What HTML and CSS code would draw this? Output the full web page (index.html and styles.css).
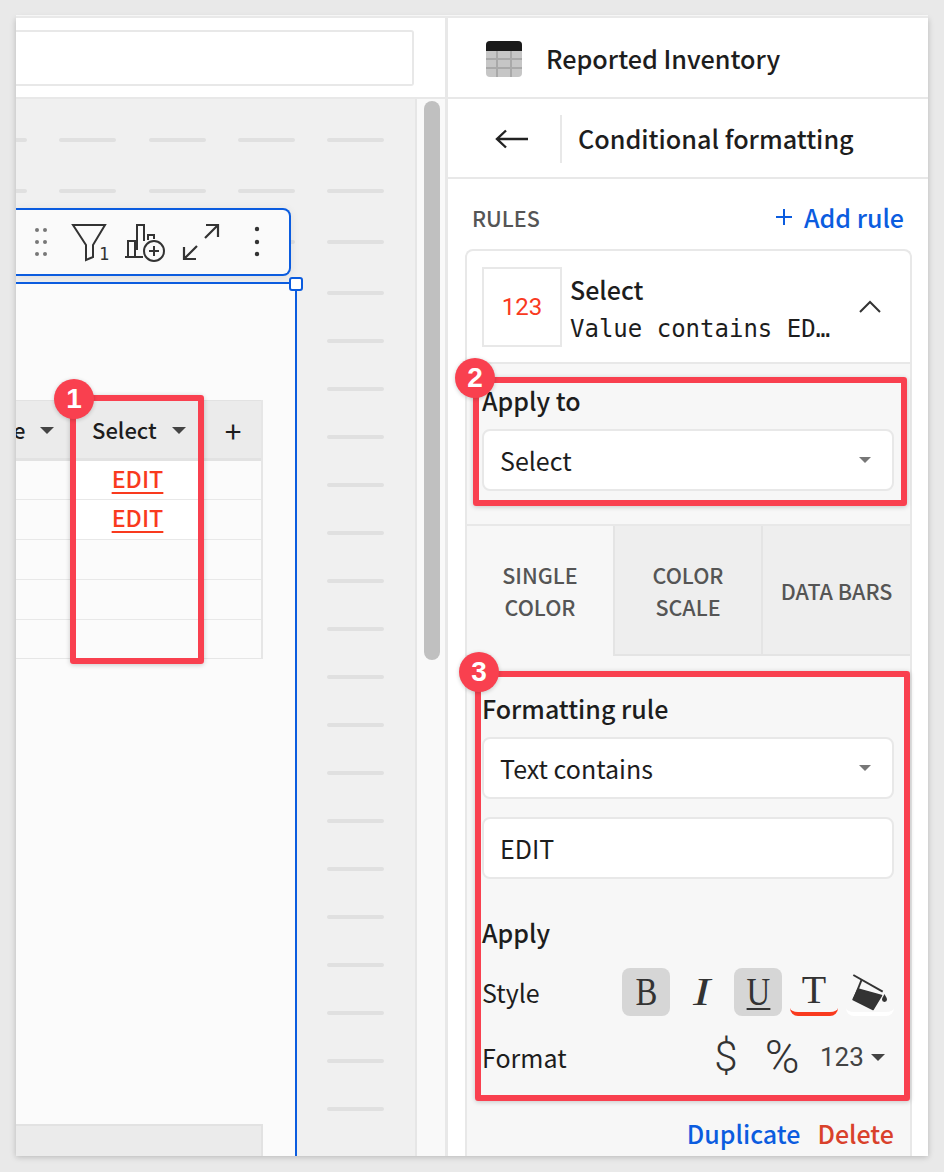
FILE: index.html
```html
<!DOCTYPE html>
<html>

<head>
<title>Conditional formatting</title>
<link rel="stylesheet" href="styles.css">
</head>

<body>
<div class="window">
	<div class="main">
		<div class="topbar"><div class="searchbox"></div></div>
		<div class="canvas">
			<div class="guides">
				<div class="guide-group guide-group-top">
					<div class="guide-row"><i></i><i></i><i></i><i></i><i></i></div>
					<div class="guide-row"><i></i><i></i><i></i><i></i><i></i></div>
					<div class="guide-row"><i></i><i></i><i></i><i></i><i></i></div>
				</div>
				<div class="guide-group">
					<div class="guide-row"><i></i><i></i><i></i><i></i><i></i></div>
					<div class="guide-row"><i></i><i></i><i></i><i></i><i></i></div>
					<div class="guide-row"><i></i><i></i><i></i><i></i><i></i></div>
					<div class="guide-row"><i></i><i></i><i></i><i></i><i></i></div>
					<div class="guide-row"><i></i><i></i><i></i><i></i><i></i></div>
					<div class="guide-row"><i></i><i></i><i></i><i></i><i></i></div>
					<div class="guide-row"><i></i><i></i><i></i><i></i><i></i></div>
					<div class="guide-row"><i></i><i></i><i></i><i></i><i></i></div>
					<div class="guide-row"><i></i><i></i><i></i><i></i><i></i></div>
					<div class="guide-row"><i></i><i></i><i></i><i></i><i></i></div>
					<div class="guide-row"><i></i><i></i><i></i><i></i><i></i></div>
					<div class="guide-row"><i></i><i></i><i></i><i></i><i></i></div>
					<div class="guide-row"><i></i><i></i><i></i><i></i><i></i></div>
					<div class="guide-row"><i></i><i></i><i></i><i></i><i></i></div>
					<div class="guide-row"><i></i><i></i><i></i><i></i><i></i></div>
					<div class="guide-row"><i></i><i></i><i></i><i></i><i></i></div>
					<div class="guide-row"><i></i><i></i><i></i><i></i><i></i></div>
					<div class="guide-row"><i></i><i></i><i></i><i></i><i></i></div>
				</div>
			</div>

			<div class="toolbar">
				<svg width="274" height="64" viewBox="18 210 274 64" fill="none" stroke="#333" stroke-width="2">
					<g fill="#777" stroke="none">
						<circle cx="37" cy="230" r="2"/><circle cx="45" cy="230" r="2"/>
						<circle cx="37" cy="242" r="2"/><circle cx="45" cy="242" r="2"/>
						<circle cx="37" cy="254" r="2"/><circle cx="45" cy="254" r="2"/>
					</g>
					<path d="M73 225H105L93 245V257L86 260V245Z"/>
					<text x="99" y="260" class="filter-count">1</text>
					<path d="M125 257H143M128 257V241H135V257M137 250V225H144V241M148 240V235H154V239"/>
					<circle cx="154" cy="251" r="10"/>
					<path d="M149 251H159M154 246V256"/>
					<path d="M206 225H218V237M218 225L205 238M184 247V259H196M184 259L197 246" stroke-width="2.2"/>
					<g fill="#333" stroke="none">
						<circle cx="257" cy="229" r="2.2"/><circle cx="257" cy="242" r="2.2"/><circle cx="257" cy="254" r="2.2"/>
					</g>
				</svg>
			</div>

			<div class="widget">
				<span class="handle"></span>
				<div class="table">
					<div class="th th-clip"><span class="th-text th-e">e</span><span class="caret caret-dark"></span></div>
					<div class="th th-select"><span class="th-text">Select</span><span class="caret caret-dark"></span></div>
					<div class="th th-add">+</div>
					<div class="td"></div><div class="td td-white"><span class="edit">EDIT</span></div><div class="td"></div>
					<div class="td"></div><div class="td td-white"><span class="edit">EDIT</span></div><div class="td"></div>
					<div class="td"></div><div class="td"></div><div class="td"></div>
					<div class="td"></div><div class="td"></div><div class="td"></div>
					<div class="td"></div><div class="td"></div><div class="td"></div>
				</div>
				<div class="table-foot"></div>
			</div>
		</div>
		<div class="scroll-gutter"><div class="scroll-thumb"></div></div>
	</div>

	<div class="side">
		<div class="side-head">
			<svg class="table-icon" width="36" height="36" viewBox="0 0 36 36">
				<rect width="36" height="36" rx="4" fill="#c6c6c6"/>
				<path d="M0 10V4a4 4 0 0 1 4-4h28a4 4 0 0 1 4 4v6z" fill="#1a1a1a"/>
				<path d="M11 10V36M25 10V36M0 18H36M0 27H36" stroke="#a9a9a9" stroke-width="2"/>
			</svg>
			<span class="side-title">Reported Inventory</span>
		</div>
		<div class="side-sub">
			<div class="back">
				<svg width="34" height="20" viewBox="0 0 34 20" fill="none" stroke="#222" stroke-width="2.4"><path d="M33 10H2M11 1.500L2 10L11 18.500"/></svg>
			</div>
			<span class="side-title">Conditional formatting</span>
		</div>
		<div class="rules-head">
			<span class="rules-label">RULES</span>
			<span class="add-rule">
				<svg width="16" height="16" viewBox="0 0 16 16" stroke="#0b5cdf" stroke-width="2"><path d="M8 0V16M0 8H16"/></svg>
				Add rule
			</span>
		</div>
		<div class="rule-card">
			<div class="rule-head">
				<div class="rule-preview">123</div>
				<div class="rule-text">
					<div class="rule-name">Select</div>
					<div class="rule-desc">Value contains EDIT</div>
				</div>
				<svg class="chevron" width="24" height="14" viewBox="0 0 24 14" fill="none" stroke="#333" stroke-width="2"><path d="M2 12L12 2L22 12"/></svg>
			</div>
			<div class="rule-body">
				<div class="apply-to">
					<div class="label">Apply to</div>
					<div class="field"><span>Select</span><span class="caret"></span></div>
				</div>
				<div class="tabs">
					<div class="tab tab-active">SINGLE<br>COLOR</div>
					<div class="tab">COLOR<br>SCALE</div>
					<div class="tab">DATA BARS</div>
				</div>
				<div class="format-rule">
					<div class="label">Formatting rule</div>
					<div class="field"><span>Text contains</span><span class="caret"></span></div>
					<div class="field field-gap"><span>EDIT</span></div>
					<div class="label label-apply">Apply</div>
					<div class="opt-row opt-style">
						<span class="opt-name">Style</span>
						<div class="opt-btns">
							<span class="btn btn-on"><span class="glyph">B</span></span>
							<span class="btn btn-italic"><span class="glyph">I</span></span>
							<span class="btn btn-on btn-under"><span class="glyph">U</span></span>
							<span class="btn btn-red"><span class="glyph">T</span></span>
							<span class="btn btn-fill">
								<svg width="48" height="44" viewBox="0 0 48 44">
									<path d="M7.300 7L36.700 23.700" stroke="#333" stroke-width="2" fill="none"/>
									<path d="M15.700 11.500L8 31" stroke="#333" stroke-width="2" fill="none"/>
									<path d="M12 21L35.500 27.500L27 41.500L7 31.500Z" fill="#333" stroke="#333" stroke-width="1.500" stroke-linejoin="round"/>
									<path d="M38.500 26C40 29 41 30 41 31.500A2.500 2.500 0 0 1 36 31.500C36 30 37 29 38.500 26Z" fill="#333"/>
								</svg>
							</span>
						</div>
					</div>
					<div class="opt-row opt-format">
						<span class="opt-name">Format</span>
						<div class="opt-btns">
							<span class="sym">$</span>
							<span class="sym sym-pct">%</span>
							<span class="num-format">123<span class="caret caret-dark"></span></span>
						</div>
					</div>
				</div>
				<div class="actions">
					<span class="act-dup">Duplicate</span>
					<span class="act-del">Delete</span>
				</div>
			</div>
		</div>
	</div>
</div>

<div class="note note-1"></div>
<div class="note note-2"></div>
<div class="note note-3"></div>
<div class="badge badge-1">1</div>
<div class="badge badge-2">2</div>
<div class="badge badge-3">3</div>
</body>

</html>
```

FILE: styles.css
```css
html, body { margin: 0; height: 1172px; overflow: hidden; }
body { background: #e9e9e9; color: #1d1d1d; font-family: "Noto Sans CJK JP", "Noto Sans", sans-serif; position: relative; }

.window { background: #fff; box-shadow: 0 -2px 0 #e9e9e9, 0 -3px 0 #f6f6f6, 0 1px 6px rgba(0,0,0,.22); display: flex; height: 1138px; margin: 18px 16px 0; overflow: hidden; width: 912px; }

/* left side: canvas */
.main { display: grid; flex: none; grid-template-columns: 401px 28px; grid-template-rows: 81px 1fr; width: 429px; border-right: 3px solid #e8e8e8; box-sizing: content-box; }
.topbar { border-bottom: 2px solid #e8e8e8; box-sizing: border-box; grid-column: 1 / 3; padding: 12px 31px 12px 0; }
.searchbox { background: #fff; border: 2px solid #e8e8e8; border-left: 0; border-radius: 0 3px 3px 0; box-sizing: border-box; height: 56px; }
.canvas { background: #f0f0f0; border-right: 2px solid #e6e6e6; overflow: hidden; position: relative; }
.scroll-gutter { background: #f9f9f9; padding: 2px 5px 0 7px; }
.scroll-thumb { background: #c0c0c0; border-radius: 8px; height: 559px; width: 16px; }

.guides { margin-left: -46px; padding-top: 39px; }
.guide-group { display: flex; flex-direction: column; gap: 44px; margin-top: 47px; }
.guide-group-top { gap: 47px; margin-top: 0; }
.guide-row { display: flex; gap: 32.300px; }
.guide-row i { background: #e0e0e0; border-radius: 2px; flex: none; height: 4px; width: 57px; }

.toolbar { background: #fafafa; border: 2px solid #0b5cdf; border-left: 0; border-radius: 0 8px 8px 0; box-shadow: 0 2px 10px rgba(0,0,0,.08); height: 64px; left: 0; position: absolute; top: 109px; width: 273px; }
.toolbar svg { display: block; margin-left: 2px; overflow: visible; }
.filter-count { fill: #333; font-family: "DejaVu Sans Mono", monospace; font-size: 17px; stroke: none; }

.widget { background: #fbfbfb; border-right: 2px solid #0b5cdf; border-top: 2px solid #0b5cdf; bottom: 0; box-sizing: border-box; display: flex; flex-direction: column; left: 0; position: absolute; top: 183px; width: 281px; }
.handle { background: #fff; border: 2px solid #0b5cdf; border-radius: 3px; box-sizing: border-box; height: 14px; position: absolute; right: -8px; top: -7px; width: 14px; }

.table { border-right: 2px solid #e6e6e6; border-bottom: 1px solid #e6e6e6; display: grid; grid-template-columns: 60px 123px 62px; grid-template-rows: 61px 39px repeat(3, 40px) 38px; margin-top: 116px; width: 245px; box-sizing: content-box; }
.th { align-items: center; background: #ebebeb; border-bottom: 3px solid #e2e2e2; border-top: 1px solid #e2e2e2; box-sizing: border-box; display: flex; font-size: 22px; font-weight: 500; }
.th-text { padding-bottom: 2px; }
.th .caret { margin-top: 2px; }
.th-clip { justify-content: space-between; padding-right: 22px; }
.th-e { margin-left: -3px; }
.th-select { border-top-color: #0b5cdf; justify-content: space-between; padding: 0 13px 0 16px; }
.th-add { font-size: 30px; font-weight: 400; justify-content: center; padding-left: 6px; }
.td { border-bottom: 1px solid #e8e8e8; box-sizing: border-box; text-align: center; }
.td:nth-last-child(-n+3) { border-bottom: 0; }
.td-white { background: #fff; }
.edit { color: #f93a1e; font-size: 23.300px; font-weight: 500; line-height: 34px; text-decoration: underline; text-decoration-thickness: 2px; text-underline-offset: 4px; }
.table-foot { background: #ebebeb; border-right: 2px solid #e2e2e2; border-top: 2px solid #e2e2e2; box-sizing: border-box; height: 32px; margin-top: auto; width: 247px; }

.caret { border-left: 6px solid transparent; border-right: 6px solid transparent; border-top: 6px solid #777; flex: none; height: 0; width: 0; }
.caret-dark { border-left-width: 7px; border-right-width: 7px; border-top: 7px solid #444; }

/* right side: panel */
.side { display: flex; flex: 1; flex-direction: column; min-width: 0; }
.side-head { align-items: center; border-bottom: 2px solid #e8e8e8; box-sizing: border-box; display: flex; flex: none; gap: 24px; height: 81px; padding: 1px 0 0 38px; }
.table-icon { margin-top: 2px; }
.side-title { font-size: 25.200px; font-weight: 500; }
.side-sub { align-items: center; border-bottom: 2px solid #e8e8e8; box-sizing: border-box; display: flex; flex: none; height: 80px; padding-top: 2px; }
.side-sub .side-title { padding-bottom: 2px; }
.back { align-items: center; border-right: 2px solid #e8e8e8; display: flex; height: 48px; margin-right: 16px; padding: 0 31px 0 47px; }
.rules-head { align-items: center; box-sizing: border-box; display: flex; flex: none; height: 70px; justify-content: space-between; padding: 6px 24px 0 24px; }
.rules-label { color: #555; font-size: 21.500px; font-weight: 500; }
.add-rule { align-items: center; color: #0b5cdf; display: flex; font-size: 25px; font-weight: 500; gap: 12px; }

.rule-card { background: #fff; border: 2px solid #e8e8e8; border-bottom: 0; border-radius: 8px 8px 0 0; display: flex; flex: 1; flex-direction: column; margin: 0 16px 0 17px; }
.rule-head { align-items: center; border-bottom: 2px solid #e8e8e8; box-sizing: border-box; display: flex; flex: none; height: 113px; padding: 0 18px 0 15px; }
.rule-preview { align-items: center; border: 2px solid #e8e8e8; box-sizing: border-box; color: #f93a1e; display: flex; flex: none; font-family: Roboto, sans-serif; font-size: 24px; height: 80px; justify-content: center; margin-right: 8px; width: 80px; }
.rule-text { flex: none; padding-top: 6px; width: 261px; }
.rule-name { font-size: 25px; font-weight: 500; line-height: 36px; }
.rule-desc { font-family: "DejaVu Sans Mono", monospace; font-size: 24px; line-height: 38px; margin-top: 3px; overflow: hidden; text-overflow: ellipsis; white-space: nowrap; }
.chevron { margin-left: auto; margin-right: 10px; }

.rule-body { background: #f7f7f7; flex: 1; }
.label { font-size: 25px; font-weight: 500; line-height: 26px; margin-bottom: 16px; }
.label-apply { margin-bottom: 0; margin-top: 40px; }
.field { align-items: center; background: #fff; border: 2px solid #e8e8e8; border-radius: 8px; box-sizing: border-box; display: flex; font-size: 25px; height: 62px; justify-content: space-between; padding: 0 21px 0 16px; }
.field-gap { margin-top: 18px; }
.apply-to { border-bottom: 2px solid #e8e8e8; padding: 23px 16px 33px 15px; }

.tabs { display: grid; grid-template-columns: 148px 148px 1fr; height: 130px; }
.tab { align-items: center; background: #eee; border-bottom: 2px solid #e4e4e4; border-right: 2px solid #e4e4e4; box-sizing: border-box; color: #555; display: flex; font-size: 21.500px; font-weight: 500; justify-content: center; line-height: 32px; padding-top: 2px; text-align: center; }
.tab:last-child { border-right: 0; }
.tab-active { background: #f7f7f7; border-bottom: 0; padding-top: 0; }

.format-rule { padding: 39px 16px 0 15px; }
.opt-row { align-items: center; display: flex; height: 48px; justify-content: space-between; }
.opt-style { margin-top: 23px; }
.opt-format { margin-top: 17px; }
.opt-name { font-size: 25px; }
.opt-btns { display: flex; gap: 8px; }
.btn { align-items: center; border-radius: 8px; box-sizing: border-box; color: #333; display: flex; font-family: "Liberation Serif", serif; font-size: 40px; height: 48px; justify-content: center; width: 48px; }
.glyph { display: block; line-height: 1; transform: scaleX(.82); }
.btn-on { background: #d6d6d6; }
.btn-italic { font-style: italic; }
.btn-italic .glyph { transform: scaleX(1.3); }
.btn-under .glyph { border-bottom: 2px solid #333; line-height: 33px; }
.btn-red { border-bottom: 4px solid #f93a1e; }
.btn-red .glyph { transform: none; }
.btn-fill { align-items: flex-start; border-bottom: 4px solid #fff; }
.sym { color: #333; font-family: Roboto, sans-serif; font-size: 42px; font-weight: 300; line-height: 48px; text-align: center; width: 48px; }
.sym-pct { font-size: 47px; }
.num-format { align-items: center; color: #444; display: flex; font-family: Roboto, sans-serif; font-size: 26px; gap: 7px; padding-left: 6px; width: 74px; }

.actions { display: flex; font-size: 25px; font-weight: 500; gap: 17px; justify-content: flex-end; line-height: 28px; margin-top: 38px; padding-right: 16px; }
.act-dup { color: #0b5cdf; }
.act-del { color: #d9412b; }

/* annotations */
.note { border: 6px solid #f9404f; border-radius: 3px; box-shadow: 0 1px 5px rgba(0,0,0,.2); box-sizing: border-box; position: absolute; }
.note-1 { height: 269px; left: 70px; top: 395px; width: 134px; }
.note-2 { height: 129px; left: 473px; top: 377px; width: 434px; }
.note-3 { height: 430px; left: 475px; top: 671px; width: 435px; }
.badge { align-items: center; background: #f9404f; border-radius: 50%; box-shadow: 0 1px 4px rgba(0,0,0,.2); color: #fff; display: flex; font-family: "Liberation Sans", sans-serif; font-size: 28px; font-weight: 700; height: 40px; justify-content: center; position: absolute; width: 40px; }
.badge-1 { left: 54px; top: 379px; }
.badge-2 { left: 455px; top: 358px; }
.badge-3 { left: 459px; top: 652px; }
```
